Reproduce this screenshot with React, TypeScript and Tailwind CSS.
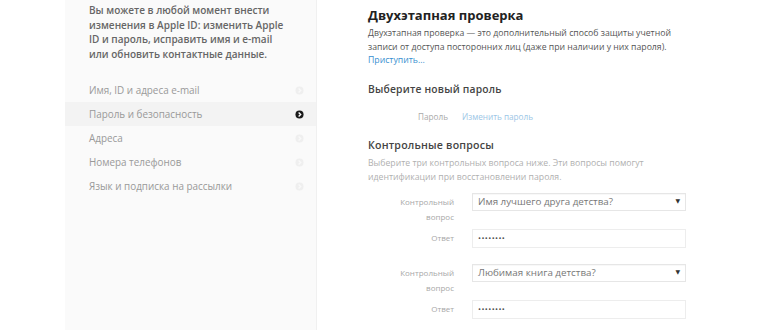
const menu = [
  "Имя, ID и адреса e-mail",
  "Пароль и безопасность",
  "Адреса",
  "Номера телефонов",
  "Язык и подписка на рассылки",
];

function Chevron({ active }: { active: boolean }) {
  return (
    <svg width="9" height="9" viewBox="0 0 10 10">
      <circle cx="5" cy="5" r="4.5" fill={active ? "#1a1a1a" : "#efefef"} />
      <path
        d="M4 2.8 L6.3 5 L4 7.2"
        fill="none"
        stroke={active ? "#fff" : "#f9f9f9"}
        strokeWidth="1.5"
      />
    </svg>
  );
}

function QuestionRow({ question }: { question: string }) {
  return (
    <>
      <div className="flex items-start">
        <div className="w-[86px] shrink-0 text-right text-[8px] leading-[15px] text-[#a8a8a8] pt-[1px]">
          Контрольный
          <br />
          вопрос
        </div>
        <div className="ml-[18px] w-[214px] shrink-0 h-[18px] border border-[#e6e6e6] bg-white flex items-center justify-between pl-[5px] pr-[5px] shadow-[inset_0_1px_1px_rgba(0,0,0,0.03)]">
          <span className="text-[9.8px] text-[#777]">{question}</span>
          <span className="text-[6px] text-[#333]">▼</span>
        </div>
      </div>
      <div className="flex items-center mt-[5px]">
        <div className="w-[86px] shrink-0 text-right text-[8px] text-[#a8a8a8]">Ответ</div>
        <div className="ml-[18px] w-[214px] shrink-0 h-[19px] border border-[#ededed] bg-white flex items-center px-[5px]">
          <span className="text-[8px] tracking-[0.4px] text-[#555]">••••••••</span>
        </div>
      </div>
    </>
  );
}

export default function App() {
  return (
    <div
      className="w-[770px] h-[330px] bg-white flex overflow-hidden"
      style={{ fontFamily: '"Open Sans", "DejaVu Sans", sans-serif' }}
    >
      <div className="ml-[65px] w-[252px] shrink-0 h-full bg-[#fafafa] border-r border-[#f0f0f0] flex flex-col">
        <p className="pl-[24px] pr-[32px] pt-[3px] text-[10px] leading-[14.6px] text-[#666] font-semibold">
          Вы можете в любой момент внести изменения в Apple ID: изменить Apple ID и пароль, исправить имя и e-mail или обновить контактные данные.
        </p>
        <div className="mt-[17px] flex flex-col">
          {menu.map((item, i) => (
            <div
              key={item}
              className={`h-[24px] flex items-center justify-between pl-[24px] pr-[12px] ${
                i === 1 ? "bg-[#f3f3f3]" : ""
              }`}
            >
              <span className="text-[9.9px] text-[#999]">{item}</span>
              <Chevron active={i === 1} />
            </div>
          ))}
        </div>
      </div>

      <div className="pl-[51px] w-[380px] shrink-0 flex flex-col">
        <h2 className="mt-[6px] text-[13px] leading-[18px] font-bold text-[#222]">
          Двухэтапная проверка
        </h2>
        <p className="mt-[3px] w-[312px] text-[8.7px] leading-[13.6px] text-[#555]">
          Двухэтапная проверка — это дополнительный способ защиты учетной записи от доступа посторонних лиц (даже при наличии у них пароля).
          <br />
          <span className="text-[#3a8fd0]">Приступить...</span>
        </p>
        <h3 className="mt-[13px] text-[10.3px] leading-[16px] font-semibold text-[#444] tracking-[0.2px]">
          Выберите новый пароль
        </h3>
        <div className="mt-[13px] flex text-[8.2px] leading-[14px]">
          <span className="ml-[50px] text-[#aaa]">Пароль</span>
          <span className="ml-[14px] text-[#9cc6e6]">Изменить пароль</span>
        </div>
        <h3 className="mt-[13px] text-[10.6px] leading-[16px] font-semibold text-[#444] tracking-[0.2px]">
          Контрольные вопросы
        </h3>
        <p className="mt-[3px] w-[290px] text-[8.7px] leading-[14.6px] text-[#b0b0b0]">
          Выберите три контрольных вопроса ниже. Эти вопросы помогут идентификации при восстановлении пароля.
        </p>
        <div className="mt-[8px]">
          <QuestionRow question="Имя лучшего друга детства?" />
        </div>
        <div className="mt-[16px]">
          <QuestionRow question="Любимая книга детства?" />
        </div>
      </div>
    </div>
  );
}
